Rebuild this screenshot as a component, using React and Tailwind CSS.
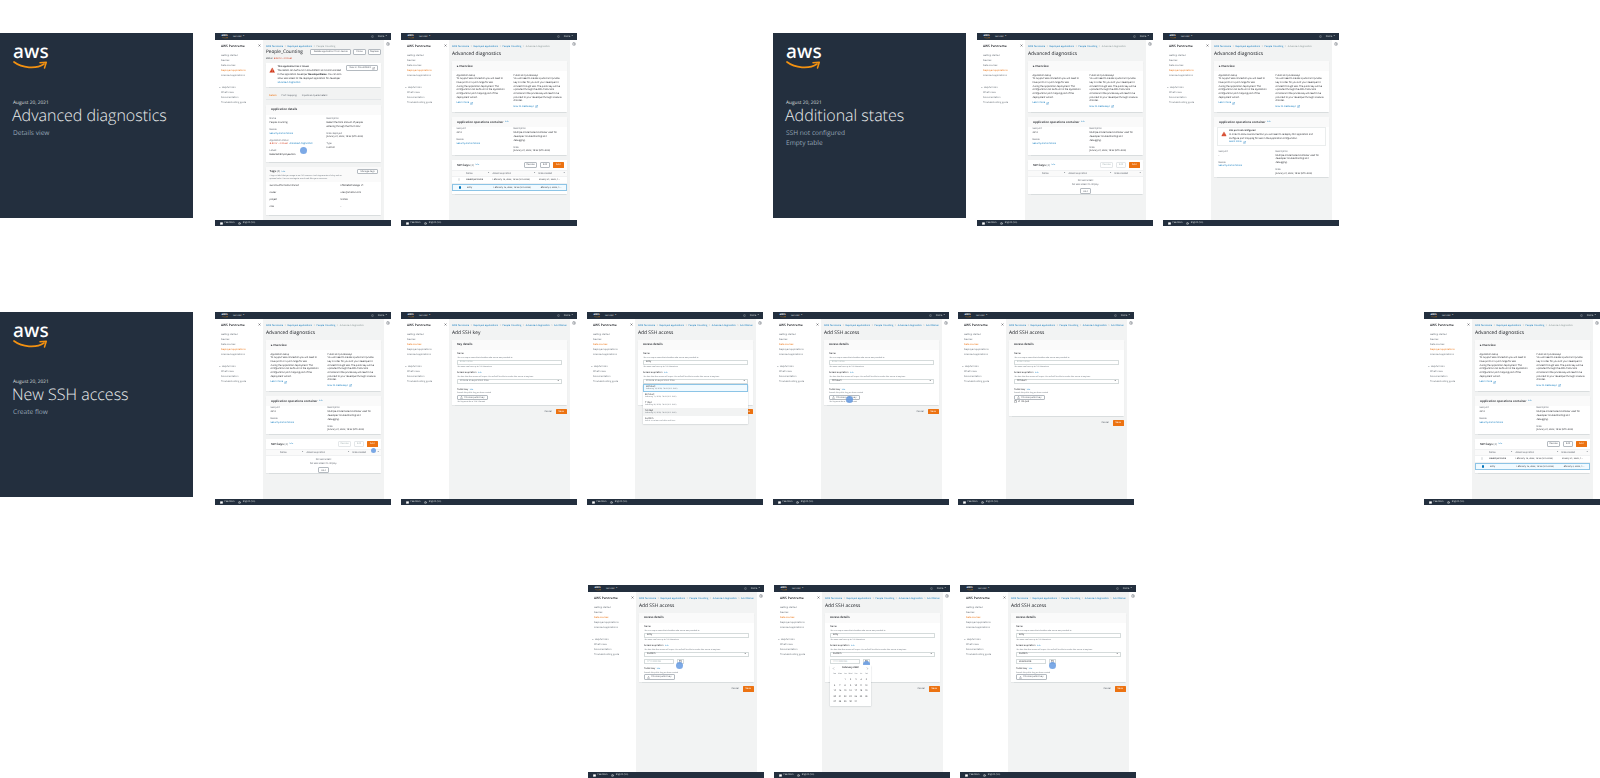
import React from 'react';
import { Bell, Calendar, ChevronLeft, ChevronRight, ExternalLink, File, Globe, MessageSquare, Settings, TriangleAlert, Upload, X } from 'lucide-react';

const blue = 'text-[#0073bb]';

function Smile({ className }) {
  return (
    <svg viewBox="0 0 35 9" className={className} fill="none" stroke="#f29111" strokeLinecap="round">
      <path d="M1 1C9 7 23 8.500 31 3" strokeWidth="1.700" />
      <path d="M27 1.800L33.300 1.300L31.500 7" strokeWidth="1.500" strokeLinejoin="round" />
    </svg>
  );
}

function TitleCard({ className, title, lines }) {
  return (
    <div className={`absolute w-[193px] h-[185px] bg-[#232f3e] text-white pl-[13px] pt-[9px] ${className}`}>
      <div className="font-['Noto_Sans',sans-serif] font-medium text-[19px] leading-[19px] tracking-[0.2px]">aws</div>
      <Smile className="w-[35px] h-[9px] -mt-[0.5px]" />
      <div className="mt-[29px] text-[4.800px] leading-[8px] text-[#d5dbdb]">August 20, 2021</div>
      <div className="-ml-[1px] -mt-[1.500px] text-[16px] leading-[21px] font-light text-[#eaeded] whitespace-nowrap">{title}</div>
      <div className="mt-[1.500px] text-[6.600px] leading-[10px] text-[#95a5b5]">
        {lines.map(l => <div key={l}>{l}</div>)}
      </div>
    </div>
  );
}

function TopBar() {
  return (
    <div className="h-[7px] bg-[#232f3e] flex items-center pl-[6px] pr-[4px] text-[2.300px] text-[#d5dbdb]">
      <div className="w-[7px] flex flex-col items-center leading-[3px] text-white font-semibold text-[3.200px]">
        aws
        <Smile className="w-[6px] h-[1.500px]" />
      </div>
      <span className="ml-[5px]">Services</span>
      <span className="ml-[1px] text-[1.800px]">▼</span>
      <Bell size={3} className="ml-auto" />
      <span className="ml-[4px]">Name</span>
      <span className="ml-[1px] text-[1.800px]">▼</span>
    </div>
  );
}

function FooterBar() {
  return (
    <div className="h-[6px] bg-[#232f3e] flex items-center gap-[1.500px] pl-[5px] text-[2.300px] text-[#d5dbdb]">
      <MessageSquare size={3} fill="#fff" color="#fff" />
      <span className="mr-[2px]">Feedback</span>
      <Globe size={3} />
      <span>English (US)</span>
    </div>
  );
}

function SideNav({ active }) {
  const top = ['Getting started', 'Devices', 'Data sources', 'Deployed applications', 'Licensed applications'];
  const links = ["What's new", 'Documentation', 'Troubleshooting guide'];
  return (
    <div className="w-[48px] bg-white pl-[6px] pr-[2px] pt-[3.500px] text-[2.400px] leading-[5.100px] text-[#687078] shrink-0">
      <div className="flex items-center justify-between text-[3.200px] leading-[4px] font-semibold text-[#16191f]">
        AWS Panorama
        <X size={3} strokeWidth={3} />
      </div>
      <div className="mt-[5.500px]">
        {top.map(t => (
          <div key={t} className={t === active ? 'text-[#ec7211]' : ''}>{t}</div>
        ))}
      </div>
      <div className="mt-[6.500px] -ml-[2px] flex items-center gap-[1px]">
        <span className="text-[1.800px]">▼</span>Helpful links
      </div>
      {links.map(l => <div key={l}>{l}</div>)}
    </div>
  );
}

function Screen({ className, active, crumbs, children }) {
  return (
    <div className={`absolute w-[176px] h-[193px] flex flex-col blur-[0.3px] ${className}`}>
      <TopBar />
      <div className="flex-1 flex min-h-0">
        <SideNav active={active} />
        <div className="w-[121px] bg-[#f2f3f3] px-[3px] pt-[3.500px] overflow-hidden">
          <div className="flex gap-[1.500px] text-[2.400px] leading-[4px] whitespace-nowrap overflow-hidden">
            {crumbs.map((c, i) => (
              <React.Fragment key={c}>
                {i > 0 && <span className="text-[#aab7b8]">&gt;</span>}
                <span className={i === crumbs.length - 1 && crumbs.length < 5 ? 'text-[#879596]' : blue}>{c}</span>
              </React.Fragment>
            ))}
          </div>
          {children}
        </div>
        <div className="flex-1 bg-white flex justify-center pt-[2px]">
          <Settings size={4} color="#545b64" />
        </div>
      </div>
      <FooterBar />
    </div>
  );
}

function Title({ children }) {
  return <div className="mt-[2.500px] text-[4.900px] leading-[8px] text-[#16191f] whitespace-nowrap">{children}</div>;
}

function Info() {
  return <span className={`ml-[1.500px] text-[2px] font-normal ${blue}`}>Info</span>;
}

function Card({ title, info, className = '', bodyClass = '', children }) {
  return (
    <div className={`bg-[#fafafa] shadow-[0_0.5px_1px_rgba(0,28,36,0.1)] ${className}`}>
      <div className="h-[10px] pl-[5px] flex items-center text-[2.950px] font-semibold text-[#16191f]">
        {title}{info && <Info />}
      </div>
      <div className={`bg-white ${bodyClass}`}>{children}</div>
    </div>
  );
}

function Btn({ children, className = '' }) {
  return (
    <div className={`h-[5.700px] flex items-center gap-[1px] justify-center border border-[#b4bac0] rounded-[1px] bg-white text-[2.400px] font-medium text-[#545b64] whitespace-nowrap ${className}`}>
      {children}
    </div>
  );
}

function Primary({ children }) {
  return (
    <div className="h-[5.700px] w-[10.700px] flex items-center justify-center bg-[#ec7211] rounded-[0.5px] text-[2.400px] font-medium text-white">
      {children}
    </div>
  );
}

function Field({ label, children, className = '' }) {
  return (
    <div className={`text-[2.300px] leading-[3.700px] text-[#16191f] whitespace-nowrap ${className}`}>
      <div className="text-[#545b64]">{label}</div>
      {children}
    </div>
  );
}

function ExtLink({ children, className = '' }) {
  return (
    <div className={`flex items-center gap-[1.500px] text-[2.300px] leading-[3.700px] ${blue} ${className}`}>
      {children}<ExternalLink size={3} />
    </div>
  );
}

function Lines({ text }) {
  return text.map(t => <div key={t}>{t}</div>);
}

function Overview() {
  return (
    <Card title="▸ Overview" className="mt-[3px]" bodyClass="grid grid-cols-[57px_1fr] pl-[4.500px] pt-[2.500px] pb-[2.200px] h-[40.700px]">
      <div className="text-[2.300px] leading-[3.700px] text-[#16191f] whitespace-nowrap">
        <Lines text={['Application setup', 'To support SSH connection you will need to', 'have ports or a port range for SSH', 'during the application deployment. This', 'configuration can be found in the application', 'configuration port mapping part of the', 'deployment wizard.']} />
        <ExtLink className="mt-[2px]">Learn more</ExtLink>
      </div>
      <div className="text-[2.300px] leading-[3.700px] text-[#16191f] whitespace-nowrap">
        <Lines text={['Public and private keys', 'You will need to create a public and private', 'key in order for you and your developer to', 'connect through SSH. The public key will be', 'uploaded through the AWS Panorama', 'console and the private key will need to be', 'provided to your developer through a secure', 'channel.']} />
        <ExtLink className="mt-[2px]">How to create keys</ExtLink>
      </div>
    </Card>
  );
}

function OpsCard({ warning }) {
  return (
    <Card title="Application operations container" info className="mt-[5.300px]" bodyClass="pb-[1.500px]">
      {warning && (
        <div className="mx-[3px] mb-[3px] px-[3px] py-[1.500px] border border-[#eaeded] flex gap-[2px] text-[2.300px] leading-[3.600px] text-[#16191f] whitespace-nowrap">
          <TriangleAlert size={6} fill="#d13212" color="#fff" strokeWidth={1.500} className="shrink-0 mt-[1.500px]" />
          <div>
            <div className="font-semibold">SSH port not configured</div>
            <Lines text={['In order to allow SSH connection you will need to redeploy this application and', 'configure port mapping for SSH in the application configuration.']} />
            <ExtLink>Learn more</ExtLink>
          </div>
        </div>
      )}
      <div className="grid grid-cols-[57px_1fr] pl-[4.500px] pt-[0.500px]">
        <div className="flex flex-col gap-[3.300px]">
          <Field label="SSH port">{warning ? '-' : '2212'}</Field>
          <Field label="Device"><span className={blue}>Security-Cam-0128-03</span></Field>
        </div>
        <div className="flex flex-col gap-[3.300px]">
          <Field label="Description">
            <Lines text={['Multiple model based container used for', 'developer troubleshooting and', 'debugging.']} />
          </Field>
          <Field label="Date">January 31, 2022, 14:32 (UTC-8:00)</Field>
        </div>
      </div>
    </Card>
  );
}

const tableCols = 'grid grid-cols-[14px_26.500px_46px_1fr] items-center whitespace-nowrap';

function KeysCard({ empty, disabled }) {
  const muted = disabled ? '!text-[#aab7b8] !border-[#e4e7e9]' : '';
  return (
    <div className="mt-[5px] bg-white shadow-[0_0.5px_1px_rgba(0,28,36,0.1)] h-[34px] overflow-hidden">
      <div className="h-[10.500px] pl-[5px] pr-[3.500px] flex items-center text-[2.950px] font-semibold text-[#16191f]">
        SSH keys <span className="ml-[1px] font-normal text-[#687078]">(2)</span><Info />
        <div className="ml-auto flex gap-[2.500px]">
          <Btn className={`w-[13.500px] ${muted}`}>Revoke</Btn>
          <Btn className={`w-[10.500px] ${muted}`}>Edit</Btn>
          <Primary>Add</Primary>
        </div>
      </div>
      <div className={`${tableCols} h-[6.500px] bg-[#fafafa] border-y border-[#f0f1f2] text-[2.300px] text-[#545b64] font-medium`}>
        <span />
        <span className="flex justify-between pr-[3px]">Name <i className="not-italic text-[1.800px]">▼</i></span>
        <span className="flex justify-between pr-[3px]">Access expiration <i className="not-italic text-[1.800px]">▼</i></span>
        <span className="flex justify-between pr-[2px]">Date created <i className="not-italic text-[1.800px]">▼</i></span>
      </div>
      {empty ? (
        <div className="flex flex-col items-center text-[2.300px] leading-[4px] text-[#545b64] pt-[2px]">
          <div className="font-medium">No SSH access</div>
          <div>No SSH access to display.</div>
          <Btn className="w-[11px] mt-[1.500px]">Add</Btn>
        </div>
      ) : (
        <div className="text-[2.250px] text-[#16191f]">
          <div className={`${tableCols} h-[7.300px] border-b border-[#f0f1f2]`}>
            <span className="justify-self-center w-[2.500px] h-[2.500px] rounded-full bg-[#e4e7e9]" />
            <span>DeveloperName</span>
            <span>February 14, 2022, 14:32 (UTC-8:00)</span>
            <span className="overflow-hidden">January 31, 2022, 1...</span>
          </div>
          <div className={`${tableCols} h-[7.300px] border border-[#8cc4e6] bg-[#f1faff]`}>
            <span className="justify-self-center w-[2.500px] h-[2.500px] rounded-full bg-[#0073bb]" />
            <span>Sissy</span>
            <span>February 16, 2022, 14:32 (UTC-8:00)</span>
            <span className="overflow-hidden">February 2, 2022, 1...</span>
          </div>
        </div>
      )}
    </div>
  );
}

function ClickDot({ className }) {
  return <div className={`absolute w-[7px] h-[7px] rounded-full bg-[#5b93e0]/80 ${className}`} />;
}

const diagCrumbs = ['AWS Panorama', 'Deployed applications', 'People_Counting', 'Advanced diagnostics'];
const addCrumbs = [...diagCrumbs, 'Add SSH access'];

function Diagnostics({ className, mode, children }) {
  return (
    <Screen className={className} active="Deployed applications" crumbs={diagCrumbs}>
      <Title>Advanced diagnostics</Title>
      <Overview />
      <OpsCard warning={mode === 'warning'} />
      {mode === 'table' && <KeysCard />}
      {mode === 'empty' && <KeysCard empty disabled />}
      {children}
    </Screen>
  );
}

function Help({ children, className = '' }) {
  return <div className={`text-[1.850px] leading-[3px] text-[#687078] whitespace-nowrap ${className}`}>{children}</div>;
}

function Label({ children }) {
  return <div className="text-[2.400px] leading-[3.400px] text-[#16191f] font-medium">{children}<Info /></div>;
}

function Input({ value, placeholder }) {
  return (
    <div className={`h-[5px] px-[2px] flex items-center border border-[#d5dbdb] rounded-[0.5px] bg-white text-[2.300px] whitespace-nowrap ${value ? 'text-[#16191f]' : 'text-[#aab7b8]'}`}>
      {value || placeholder}
    </div>
  );
}

function SelectBox({ value, muted }) {
  return (
    <div className="h-[5px] px-[2px] flex items-center justify-between border border-[#d5dbdb] rounded-[0.5px] bg-white text-[2.350px] whitespace-nowrap">
      <span className={muted ? 'text-[#687078]' : 'text-[#16191f]'}>{value}</span>
      <span className="text-[1.800px] text-[#16191f]">▼</span>
    </div>
  );
}

function ExpiryMenu() {
  const opts = [
    ['24 hours', 'February 14, 2022, 14:32 (UTC-8:00)', 'bg-[#f1faff] border border-[#8cc4e6]'],
    ['48 hours', 'February 15, 2022, 14:32 (UTC-8:00)', ''],
    ['7 days', 'February 20, 2022, 14:32 (UTC-8:00)', ''],
    ['14 days', 'February 27, 2022, 14:32 (UTC-8:00)', 'bg-[#f2f3f3]'],
    ['Custom', 'Select a custom end date and time', ''],
  ];
  return (
    <div className="absolute z-10 left-0 right-0 top-full bg-white shadow-[0_0.5px_1.500px_rgba(0,28,36,0.25)]">
      {opts.map(([name, sub, cls]) => (
        <div key={name} className={`h-[8px] px-[2px] flex flex-col justify-center text-[2.300px] leading-[3.200px] text-[#16191f] ${cls}`}>
          {name}
          <span className="text-[1.900px] leading-[2.800px] text-[#687078]">{sub}</span>
        </div>
      ))}
    </div>
  );
}

function CalendarPopup() {
  const weeks = [
    ['', '', '1', '2', '3', '4', '5'],
    ['6', '7', '8', '9', '10', '11', '12'],
    ['13', '14', '15', '16', '17', '18', '19'],
    ['20', '21', '22', '23', '24', '25', '26'],
    ['27', '28', '29', '30', '31', '', ''],
  ];
  return (
    <div className="absolute z-10 left-0 top-full mt-[1px] w-[41px] h-[41px] px-[2px] bg-white shadow-[0_0.5px_1.500px_rgba(0,28,36,0.25)] text-[2.100px] text-[#16191f]">
      <div className="h-[6.500px] flex items-center justify-between text-[2.400px] font-semibold">
        <ChevronLeft size={3} />February 2022<ChevronRight size={3} />
      </div>
      <div className="grid grid-cols-7 text-center leading-[5.600px]">
        {['Sun', 'Mon', 'Tue', 'Wed', 'Thu', 'Fri', 'Sat'].map(d => <span key={d} className="text-[#687078] text-[1.800px]">{d}</span>)}
        {weeks.flat().map((d, i) => <span key={i}>{d}</span>)}
      </div>
    </div>
  );
}

function AddPage({ className, title, section, name, expiry, menu, custom, calendar, fileAdded, children }) {
  return (
    <Screen className={className} active="Data sources" crumbs={addCrumbs}>
      <div className="relative">
        <Title>{title}</Title>
        <div className="mt-[2.700px] bg-[#fafafa] shadow-[0_0.5px_1px_rgba(0,28,36,0.1)]">
          <div className="h-[10px] pl-[5px] flex items-center text-[2.950px] font-semibold text-[#16191f]">{section}</div>
          <div className={`bg-white px-[5px] pt-[1.900px] ${fileAdded ? 'h-[66.600px]' : custom ? 'pb-[2.400px]' : 'pb-[1.200px]'}`}>
            <div className="text-[2.400px] leading-[3.400px] text-[#16191f] font-medium">Name</div>
            <Help className="mt-[0.800px]">This is a unique name that identifies who access was provided to</Help>
            <div className="mt-[0.900px]"><Input value={name} placeholder="Enter name" /></div>
            <Help className="mt-[0.500px]">The name can have up to 100 characters</Help>
            <div className="mt-[3.100px]"><Label>Access expiration</Label></div>
            <Help>The date that this access will expire. You will still be able to revoke this access at any time</Help>
            <div className="relative mt-[0.900px]">
              <SelectBox value={expiry || 'Choose an expiration time'} muted={!expiry || menu} />
              {menu && <ExpiryMenu />}
            </div>
            {custom && (
              <div className="flex gap-[3px] mt-[2.300px]">
                <div className="relative w-[30px]">
                  <Input value={custom === true ? '' : custom} placeholder="YYYY/MM/DD" />
                  {calendar && <CalendarPopup />}
                </div>
                <div className="w-[7px] h-[5px] border border-[#d5dbdb] flex items-center justify-center text-[#545b64]">
                  <Calendar size={3} />
                </div>
              </div>
            )}
            <div className={custom ? 'mt-[3.600px]' : 'mt-[4.300px]'}><Label>Public key</Label></div>
            <Help>Provide the public key you have created</Help>
            <Btn className="w-[30.700px] mt-[0.300px]"><Upload size={3} />Choose public key</Btn>
            {fileAdded
              ? <div className="flex items-center gap-[1px] mt-[0.200px] text-[2.300px] leading-[3px] text-[#16191f]"><File size={3} />id_rsa.pub</div>
              : !custom && <Help className="mt-[0.200px]">The key must be in SSH-2 format</Help>}
          </div>
        </div>
        <div className="flex items-center justify-end gap-[4px] pr-[0.500px] mt-[4px] text-[2.400px] font-medium text-[#545b64]">
          Cancel
          <Primary>Save</Primary>
        </div>
        {children}
      </div>
    </Screen>
  );
}

function DetailsScreen({ className }) {
  const rows = [
    ['aws:cloudformation:stackid', 'CfNoteNCPackage_V1'],
    ['owner', 'user@amazon.com'],
    ['project', 'Unit3A'],
    ['role', '-'],
  ];
  return (
    <Screen className={className} active="Deployed applications" crumbs={['AWS Panorama', 'Deployed applications', 'People_Counting']}>
      <div className="relative">
        <div className="mt-[0.500px] flex items-center justify-between">
          <div className="text-[4.700px] leading-[8px] font-medium text-[#16191f]">People_Counting</div>
          <div className="flex gap-[2px]">
            <Btn className="w-[40.700px]">Delete application from device</Btn>
            <Btn className="w-[12.700px]">Clone</Btn>
            <Btn className="w-[13.300px]">Replace</Btn>
          </div>
        </div>
        <div className="mt-[0.500px] flex items-center gap-[1px] text-[2.300px] leading-[4px] text-[#16191f]">
          Status <span className="text-[#d13212]">⊗ Error - 2 Issues</span>
        </div>
        <div className="mt-[2.300px] h-[24.500px] bg-white shadow-[0_0.5px_1px_rgba(0,28,36,0.1)] pl-[3px] pr-[3px] pt-[2.500px] flex gap-[2px] text-[2.300px] leading-[3.900px] text-[#16191f] whitespace-nowrap">
          <TriangleAlert size={6.500} fill="#d13212" color="#fff" strokeWidth={1.500} className="shrink-0 mt-[1.500px]" />
          <div>
            <div className="font-semibold">This application has 2 Issues</div>
            <div>The details can be found in CloudWatch and communicated</div>
            <div>to the application developer <b>DeveloperName</b>. You can also</div>
            <div>allow SSH access to the deployed application for developer</div>
            <div className={blue}>advanced diagnostics.</div>
          </div>
          <Btn className="ml-auto w-[31.700px]">View in CloudWatch <ExternalLink size={3} /></Btn>
        </div>
        <div className="mt-[6px] h-[7px] flex items-center gap-[5px] pl-[3px] border-b border-[#e4e7e9] text-[2.400px] font-medium text-[#545b64]">
          <span className="text-[#ec7211]">Details</span>
          <span>Port mapping</span>
          <span>Inputs and parameters</span>
        </div>
        <Card title="Application details" className="mt-[4.300px]" bodyClass="grid grid-cols-[57px_1fr] pl-[3.500px] pt-[2.500px] h-[47.500px]">
          <div className="flex flex-col gap-[3.300px]">
            <Field label="Name">People_Counting</Field>
            <Field label="Device"><span className={blue}>Security-Cam-0128-03</span></Field>
            <Field label="Application status">
              <span className="text-[#d13212]">⊗ Error - 2 issues</span> <span className={`ml-[1px] ${blue}`}>Advanced diagnostics</span>
            </Field>
            <Field label="Labels">Detected/Employee-task</Field>
          </div>
          <div className="flex flex-col gap-[3.300px]">
            <Field label="Description">
              <Lines text={['Detect the total amount of people', 'entering through the front door.']} />
            </Field>
            <Field label="Date deployed">January 31, 2022, 14:32 (UTC-8:00)</Field>
            <Field label="Type">Custom</Field>
          </div>
        </Card>
        <div className="mt-[5px] h-[48px] bg-white shadow-[0_0.5px_1px_rgba(0,28,36,0.1)] overflow-hidden">
          <div className="h-[14.500px] pl-[3.500px] pr-[3px] pt-[1.500px] flex bg-[#fafafa]">
            <div className="whitespace-nowrap">
              <div className="text-[2.950px] leading-[4.500px] font-semibold text-[#16191f]">Tags <span className="font-normal text-[#687078]">(4)</span><Info /></div>
              <Help>A tag is a label that you assign to an AWS resource. Each tag consists of a key and an</Help>
              <Help>optional value. You can use tags to search and filter your resources.</Help>
            </div>
            <Btn className="ml-auto w-[21px]">Manage tags</Btn>
          </div>
          <div className="grid grid-cols-[71px_1fr] pl-[3.500px] text-[2.300px] leading-[7px] text-[#16191f]">
            {rows.map(([k, v]) => (
              <React.Fragment key={k}>
                <span>{k}</span>
                <span>{v}</span>
              </React.Fragment>
            ))}
          </div>
        </div>
        <ClickDot className="left-[34px] top-[98.500px]" />
      </div>
    </Screen>
  );
}

export default function App() {
  return (
    <div className="relative w-[1600px] h-[778px] bg-white overflow-hidden font-['Open_Sans',sans-serif] [text-rendering:geometricPrecision]">
      <TitleCard className="left-0 top-[33px]" title="Advanced diagnostics" lines={['Details view']} />
      <DetailsScreen className="left-[215px] top-[33px]" />
      <Diagnostics className="left-[401px] top-[33px]" mode="table" />

      <TitleCard className="left-[773px] top-[33px]" title="Additional states" lines={['SSH not configured', 'Empty table']} />
      <Diagnostics className="left-[977px] top-[33px]" mode="empty" />
      <Diagnostics className="left-[1163px] top-[33px]" mode="warning" />

      <TitleCard className="left-0 top-[312px]" title="New SSH access" lines={['Create flow']} />
      <Diagnostics className="left-[215px] top-[312px]" mode="empty">
        <ClickDot className="!w-[5px] !h-[5px] left-[155.500px] top-[136px]" />
      </Diagnostics>
      <AddPage className="left-[401px] top-[312px]" title="Add SSH key" section="Key details" />
      <AddPage className="left-[587px] top-[312px]" title="Add SSH access" section="Access details" name="Sissy" menu>
        <ClickDot className="left-[68px] top-[56px]" />
      </AddPage>
      <AddPage className="left-[773px] top-[312px]" title="Add SSH access" section="Access details" expiry="48 hours">
        <ClickDot className="left-[21.500px] top-[67px]" />
      </AddPage>
      <AddPage className="left-[958px] top-[312px]" title="Add SSH access" section="Access details" expiry="48 hours" fileAdded />
      <Diagnostics className="left-[1424px] top-[312px]" mode="table" />

      <AddPage className="left-[588px] top-[585px]" title="Add SSH access" section="Access details" name="Sissy" expiry="Custom" custom>
        <ClickDot className="left-[37px] top-[60px]" />
      </AddPage>
      <AddPage className="left-[774px] top-[585px]" title="Add SSH access" section="Access details" name="Sissy" expiry="Custom" custom calendar>
        <ClickDot className="left-[38px] top-[59px]" />
      </AddPage>
      <AddPage className="left-[960px] top-[585px]" title="Add SSH access" section="Access details" name="Sissy" expiry="Custom" custom="2022/02/24">
        <ClickDot className="left-[38px] top-[60px]" />
      </AddPage>
    </div>
  );
}
